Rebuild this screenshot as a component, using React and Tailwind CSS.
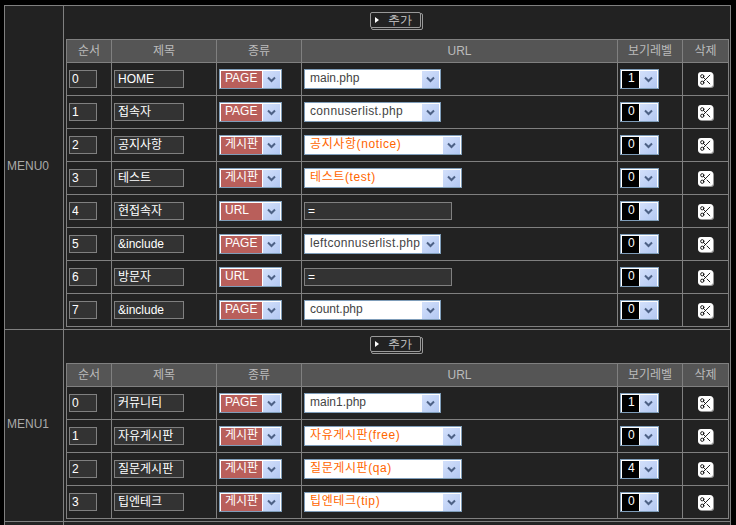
import { Scissors } from "lucide-react";

const menus = [
  {
    name: "MENU0",
    rows: [
      { title: "HOME", kind: "PAGE", url: "main.php", urlW: "w-[137px]", level: 1 },
      { title: "접속자", kind: "PAGE", url: "connuserlist.php", urlW: "w-[137px]", wide: true, level: 0 },
      { title: "공지사항", kind: "게시판", url: "공지사항(notice)", urlW: "w-[158px]", hot: true, level: 0 },
      { title: "테스트", kind: "게시판", url: "테스트(test)", urlW: "w-[158px]", hot: true, level: 0 },
      { title: "현접속자", kind: "URL", plain: "=", level: 0 },
      { title: "&include", kind: "PAGE", url: "leftconnuserlist.php", urlW: "w-[137px]", wide: true, level: 0 },
      { title: "방문자", kind: "URL", plain: "=", level: 0 },
      { title: "&include", kind: "PAGE", url: "count.php", urlW: "w-[137px]", level: 0 },
    ],
  },
  {
    name: "MENU1",
    rows: [
      { title: "커뮤니티", kind: "PAGE", url: "main1.php", urlW: "w-[137px]", level: 1 },
      { title: "자유게시판", kind: "게시판", url: "자유게시판(free)", urlW: "w-[158px]", hot: true, level: 0 },
      { title: "질문게시판", kind: "게시판", url: "질문게시판(qa)", urlW: "w-[158px]", hot: true, level: 4 },
      { title: "팁엔테크", kind: "게시판", url: "팁엔테크(tip)", urlW: "w-[158px]", hot: true, level: 0 },
    ],
  },
];

const font = "font-['Liberation_Sans','Noto_Sans_CJK_KR',sans-serif]";

function Arrow() {
  return (
    <span className="flex h-[17px] w-[17px] shrink-0 items-center justify-center bg-gradient-to-br from-[#d3e0fb] to-[#b3c8f2]">
      <svg width="9" height="7" viewBox="0 0 9 7">
        <path d="M1 1.5 L4.5 5 L8 1.5" fill="none" stroke="#4d6185" strokeWidth="2" />
      </svg>
    </span>
  );
}

function Select({ className, fill, children }) {
  return (
    <div className={`flex h-[20px] items-center border border-[#7f9db9] bg-white pl-px pr-px ${className}`}>
      <span className={`flex h-[17px] min-w-0 flex-1 items-center overflow-hidden whitespace-nowrap pb-[2px] ${fill}`}>
        {children}
      </span>
      <span className="ml-px">
        <Arrow />
      </span>
    </div>
  );
}

function Field({ value, className }) {
  return (
    <input
      readOnly
      value={value}
      className={`block h-[18px] border border-[#808080] bg-[#333333] pl-[2px] text-[12px] text-white outline-none ${font} ${className}`}
    />
  );
}

function AddButton() {
  return (
    <div className="flex h-[33px] items-start justify-center pt-[6px] pr-[2px]">
      <div className="relative h-[18px] w-[53px]">
        <div className="absolute left-[1px] top-[1px] h-[17px] w-[52px] rounded-[2px] border border-[#999999]" />
        <div className="absolute left-0 top-0 flex h-[16px] w-[51px] items-center rounded-[2px] border border-[#999999] bg-[#222222] pl-[4px]">
          <svg width="4" height="6" viewBox="0 0 4 6">
            <path d="M0 0 L4 3 L0 6 Z" fill="#ffffff" />
          </svg>
          <span className="ml-[9px] pb-px text-[12px] text-[#cccccc]">추가</span>
        </div>
      </div>
    </div>
  );
}

function MenuTable({ rows }) {
  const th = "border border-[#808080] bg-[#555555] pb-px text-center text-[12px] font-normal text-[#bbbbbb]";
  const td = "border border-[#808080] pl-[2px] align-middle";
  return (
    <table className={`w-[662px] table-fixed border-collapse ${font}`}>
      <colgroup>
        <col className="w-[45px]" />
        <col className="w-[105px]" />
        <col className="w-[85px]" />
        <col className="w-[316px]" />
        <col className="w-[65px]" />
        <col className="w-[46px]" />
      </colgroup>
      <thead>
        <tr className="h-[23px]">
          <th className={th}>순서</th>
          <th className={th}>제목</th>
          <th className={th}>종류</th>
          <th className={th}>URL</th>
          <th className={th}>보기레벨</th>
          <th className={th}>삭제</th>
        </tr>
      </thead>
      <tbody>
        {rows.map((row, i) => (
          <tr key={i} className="h-[33px]">
            <td className={td}>
              <Field value={i} className="w-[28px]" />
            </td>
            <td className={td}>
              <Field value={row.title} className="w-[70px] pl-[3px]" />
            </td>
            <td className={td}>
              <Select className="w-[63px]" fill="bg-[#b95f5b] pl-[4px] text-[12px] text-white">
                {row.kind}
              </Select>
            </td>
            <td className={td}>
              {row.plain ? (
                <Field value={row.plain} className="w-[148px] pl-[3px]" />
              ) : (
                <Select
                  className={row.urlW}
                  fill={
                    row.hot
                      ? "pl-[4px] text-[12px] tracking-[0.6px] text-[#ff6600]"
                      : row.wide
                        ? "pl-[4px] text-[12px] tracking-[0.35px] text-[#444444]"
                        : "pl-[4px] text-[12px] text-[#444444]"
                  }
                >
                  {row.url}
                </Select>
              )}
            </td>
            <td className={td}>
              <Select className="w-[39px]" fill="bg-black pl-[6px] text-[12px] text-white">
                {row.level}
              </Select>
            </td>
            <td className="border border-[#808080] align-middle">
              <div className="flex justify-center">
                <span className="flex h-[15px] w-[15px] items-center justify-center rounded-[3px] bg-white shadow-[1px_1px_0_#999999]">
                  <Scissors size={13} strokeWidth={1.6} color="#000000" />
                </span>
              </div>
            </td>
          </tr>
        ))}
      </tbody>
    </table>
  );
}

export default function App() {
  return (
    <div className="h-[525px] w-[736px] overflow-hidden bg-black pl-[4px] pt-[5px]">
      <div className="flex h-[520px] w-[727px] flex-col border-x border-t border-[#808080] bg-[#222222]">
        {menus.map((menu) => (
          <div key={menu.name} className="flex border-b border-[#808080]">
            <div className={`flex w-[59px] shrink-0 items-center border-r border-[#808080] pb-[3px] pl-[2px] text-[12px] text-[#aaaaaa] ${font}`}>
              {menu.name}
            </div>
            <div className="pb-[2px] pl-[2px]">
              <AddButton />
              <MenuTable rows={menu.rows} />
            </div>
          </div>
        ))}
        <div className="w-[59px] flex-1 border-r border-[#808080]" />
      </div>
    </div>
  );
}
